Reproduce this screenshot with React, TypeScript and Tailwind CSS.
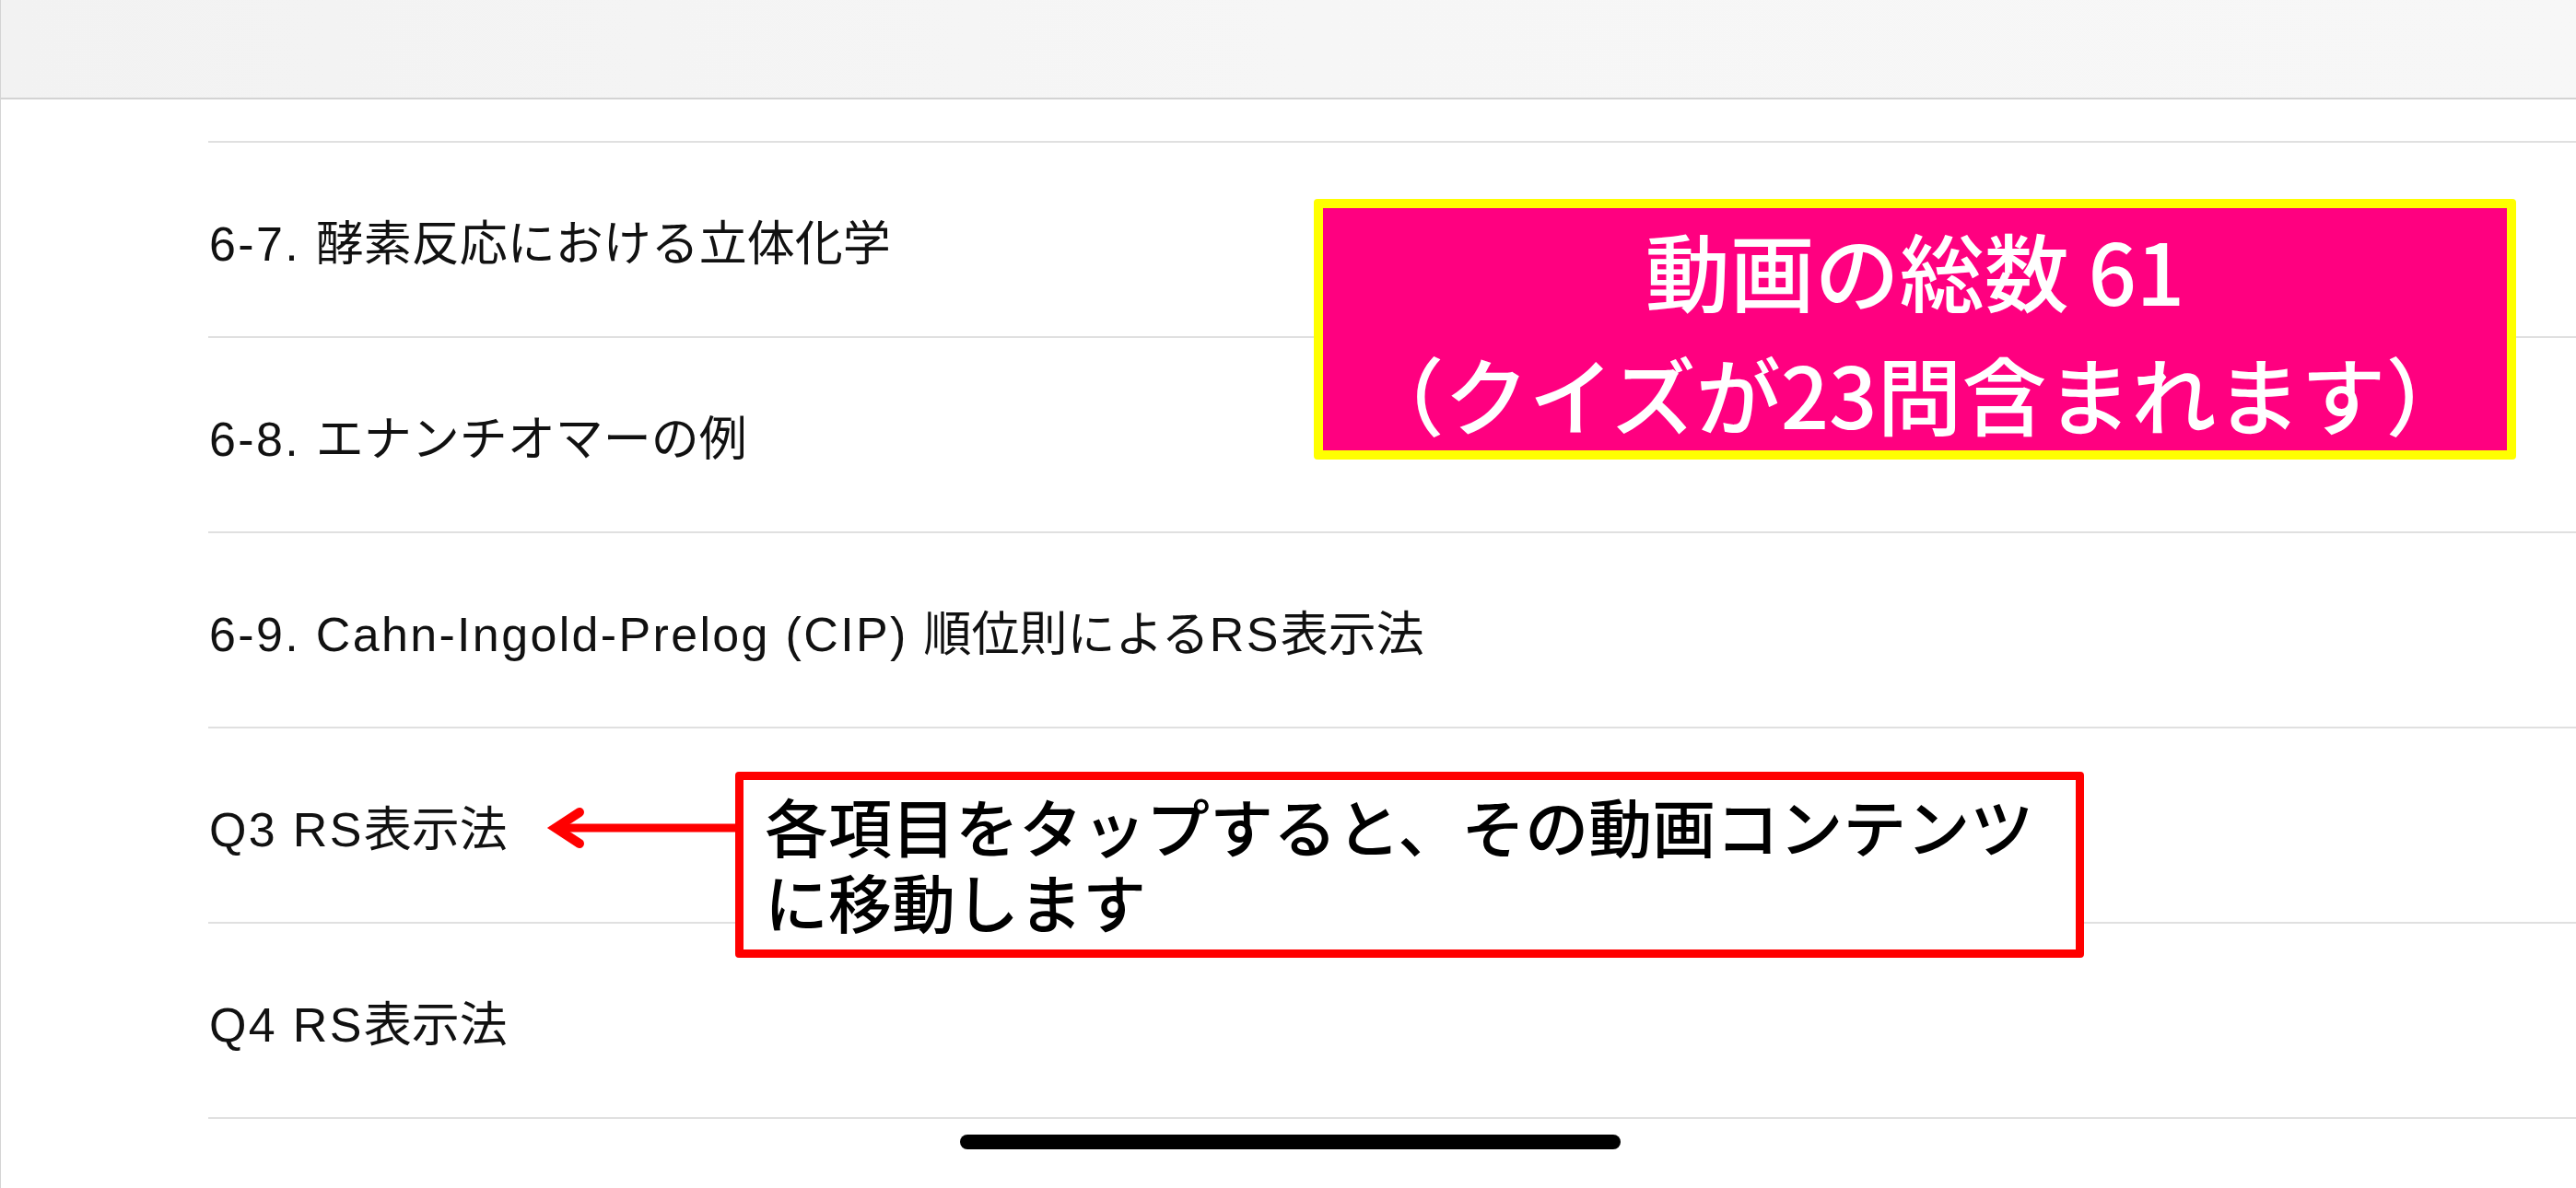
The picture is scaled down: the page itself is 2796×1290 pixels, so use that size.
const rows = [
  "6-7. 酵素反応における立体化学",
  "6-8. エナンチオマーの例",
  "6-9. Cahn-Ingold-Prelog (CIP) 順位則によるRS表示法",
  "Q3 RS表示法",
  "Q4 RS表示法",
];

// latin runs get a touch of tracking so they sit wider, like the system font
function RowText({ text }: { text: string }) {
  const parts = text.split(/([\x20-\x7e]+)/).filter(Boolean);
  return (
    <span className="whitespace-pre">
      {parts.map((p, i) =>
        /^[\x20-\x7e]+$/.test(p) ? (
          <span key={i} className="tracking-[0.045em]">{p}</span>
        ) : (
          <span key={i}>{p}</span>
        )
      )}
    </span>
  );
}

function ArrowLeftRed() {
  return (
    <svg width="212" height="60" viewBox="0 0 212 60" className="mt-[32px] shrink-0">
      <path d="M20 29 L212 29" stroke="#ff0000" strokeWidth="9" fill="none" />
      <path d="M43 12 L17 29 L43 46" stroke="#ff0000" strokeWidth="10" strokeLinecap="round" strokeLinejoin="miter" fill="none" />
    </svg>
  );
}

export default function App() {
  return (
    <div className="relative w-[2796px] h-[1290px] overflow-hidden bg-white border-l border-[#d4d4d4] font-['Liberation_Sans','Noto_Sans_CJK_JP',sans-serif]">
      {/* nav bar */}
      <div className="h-[108px] border-b-2 border-[#d3d3d3] bg-gradient-to-r from-[#f2f2f2] via-[#f6f6f6] to-[#f7f7f7]" />

      {/* list */}
      <ul className="pl-[225px]">
        <li className="h-[47px] border-b-2 border-[#e0e0e0]" />
        {rows.map((r) => (
          <li key={r} className="h-[212px] border-b-2 border-[#e0e0e0] flex items-center pt-[10px] pl-[1px] text-[52px] leading-none text-[#111]">
            <RowText text={r} />
          </li>
        ))}
      </ul>

      {/* home indicator */}
      <div className="flex justify-center pt-[17px] pl-[4px]">
        <div className="w-[717px] h-[16px] rounded-full bg-black" />
      </div>

      {/* annotation: total */}
      <div className="absolute left-[1425px] top-[216px] w-[1305px] h-[283px] rounded-[4px] border-[10px] border-[#ffff00] bg-[#ff0080] flex flex-col items-center justify-center pt-[2px] text-white text-[92px] leading-[134px] font-medium font-['Noto_Sans_CJK_JP',sans-serif] whitespace-nowrap">
        <div>動画の総数 61</div>
        <div>（クイズが23問含まれます）</div>
      </div>

      {/* annotation: tap hint */}
      <div className="absolute left-[585px] top-[838px] flex items-start">
        <ArrowLeftRed />
        <div className="w-[1464px] h-[202px] rounded-[4px] border-[9px] border-[#ff0000] bg-white pl-[23px] pt-[8px] text-[69px] leading-[82px] font-medium text-black font-['Noto_Sans_CJK_JP',sans-serif] whitespace-nowrap">
          <div>各項目をタップすると、その動画コンテンツ</div>
          <div>に移動します</div>
        </div>
      </div>
    </div>
  );
}
